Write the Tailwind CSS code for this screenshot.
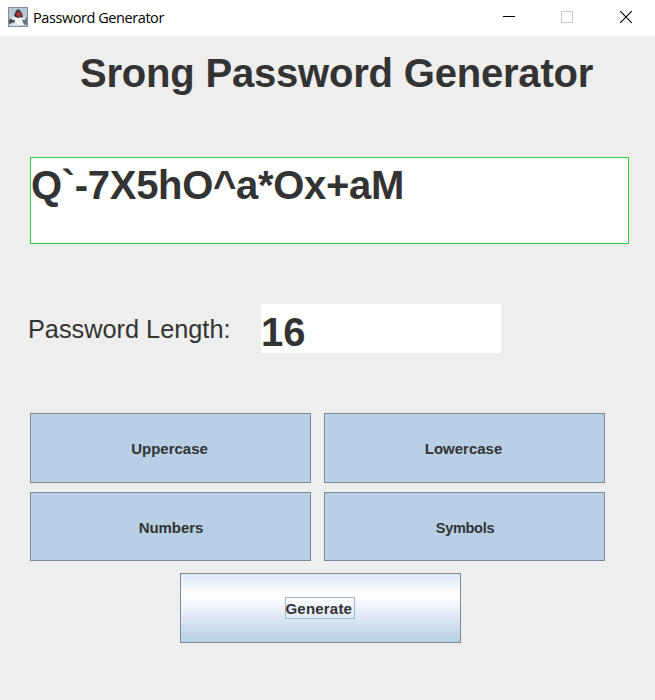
<!DOCTYPE html>
<html lang="en">
<head>
<meta charset="utf-8">
<title>Password Generator</title>
<script src="https://cdn.jsdelivr.net/npm/@tailwindcss/browser@4"></script>
</head>
<body class="w-[655px] h-[700px] overflow-hidden bg-[#eeeeee] text-[#333333] font-['Liberation_Sans',sans-serif]">
<header class="flex h-9 items-center bg-white pl-2 text-black">
  <svg class="mt-[-2px] h-5 w-5 shrink-0" viewBox="0 0 20 20">
    <rect width="20" height="20" fill="#7f8f9f"/>
    <rect x="1" y="1" width="18" height="18" fill="#b9c7d4"/>
    <path d="M1 13L5 10L8 12L6 16L1 17Z" fill="#4a535c"/>
    <path d="M14 12L19 10V18L15 17Z" fill="#68737d"/>
    <path d="M3 10L8 9L9 13L4 13Z" fill="#e6eaee"/>
    <path d="M7 11Q10 9 13 11L16 18H7Z" fill="#fafafa"/>
    <path d="M10 2Q7 4 6 9L9 11L15 10Q14 4 10 2Z" fill="#3b3c40"/>
    <circle cx="10.8" cy="7.5" r="2.4" fill="#b92c32"/>
    <path d="M13 11L18 10L17 13L14 13Z" fill="#e2e7eb"/>
    <path d="M2 17L7 15L12 19H2Z" fill="#d8dee3"/>
  </svg>
  <h1 class="ml-[5px] w-[200px] whitespace-nowrap font-['Open_Sans'] text-[14.5px] leading-5 tracking-[-0.43px]">Password Generator</h1>
  <svg class="ml-auto h-9 w-[175px]" viewBox="0 0 175 36" fill="none" shape-rendering="crispEdges">
    <path d="M23 16.5H35" stroke="#000"/>
    <rect x="81.5" y="11.5" width="11" height="11" stroke="#c8c8c8"/>
    <path d="M140.2 11.2L151.8 22.8M151.8 11.2L140.2 22.8" stroke="#000" stroke-width="1.1" shape-rendering="auto"/>
  </svg>
</header>
<main class="flex flex-col">
  <h2 class="mt-[14px] ml-20 h-[46px] whitespace-nowrap text-[40px] leading-[46px] font-bold tracking-[-0.2px]">Srong Password Generator</h2>
  <div class="mt-[61px] ml-[30px] h-[87px] w-[599px] border border-[#31cf3c] bg-white pt-[4px] text-[40px] leading-[46px] font-bold tracking-[-0.31px]">Q`-7X5hO^a*Ox+aM</div>
  <div class="mt-[60px] ml-7 flex h-[50px]">
    <label class="w-[233px] whitespace-nowrap text-[25.3px] leading-[51px]">Password Length:</label>
    <div class="h-[49px] w-[240px] bg-white pt-[5px] text-[40px] leading-[46px] font-bold">16</div>
  </div>
  <div class="mt-[59px] ml-[30px] grid grid-cols-[281px_281px] grid-rows-[70px_70px] gap-x-[13px] gap-y-[9px] text-[15px] font-bold">
    <button class="border border-[#7a8a99] bg-[#b8cfe5] pt-[3px] pr-[2px]">Uppercase</button>
    <button class="border border-[#7a8a99] bg-[#b8cfe5] pt-[3px] pr-[2px]">Lowercase</button>
    <button class="h-[69px] border border-[#7a8a99] bg-[#b8cfe5] pt-[4px] pl-px tracking-[-0.1px]">Numbers</button>
    <button class="h-[69px] border border-[#7a8a99] bg-[#b8cfe5] pt-[4px] pl-px text-[14.5px] tracking-[-0.3px]">Symbols</button>
  </div>
  <button class="mt-[11px] ml-[180px] flex h-[70px] w-[281px] items-center justify-center border border-[#7a8a99] bg-linear-[180deg,#dde8f3_0%,#ffffff_30%,#ffffff_32%,#b8cfe5_100%] pr-[2px] text-[15px] font-bold"><span class="flex h-[22px] w-[70px] items-center border border-[#a3b8cc] pt-[2px] tracking-[0.2px]">Generate</span></button>
</main>
</body>
</html>
